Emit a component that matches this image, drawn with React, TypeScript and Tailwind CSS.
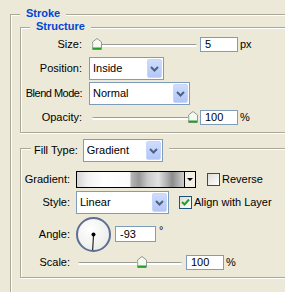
import React from 'react'

// XP style Photoshop "Stroke" layer style panel

function Chevron() {
  return (
    <svg width="9" height="6" viewBox="0 0 9 6">
      <polyline points="1,1 4.5,4.5 8,1" fill="none" stroke="#4d6185" strokeWidth="2" />
    </svg>
  )
}

function Select({ text, className }: { text: string; className: string }) {
  return (
    <div className={`flex h-[23px] shrink-0 items-stretch border border-[#7f9db9] bg-white ${className}`}>
      <span className="flex flex-1 items-center pl-[3px]">{text}</span>
      <div className="m-[1px] flex w-[15px] items-center justify-center rounded-[2px] border border-[#c8d6fb] bg-[linear-gradient(#cfdcfd,#b3c6f7)]">
        <Chevron />
      </div>
    </div>
  )
}

function Field({ value, className }: { value: string; className: string }) {
  return (
    <div className={`flex shrink-0 items-center border border-[#7f9db9] bg-white pl-[4px] ${className}`}>
      {value}
    </div>
  )
}

function Knob() {
  return (
    <svg width="10" height="12" viewBox="0 0 10 12">
      <path d="M0.5 4 L5 0.5 L9.5 4 V11.5 H0.5 Z" fill="#f7f7f3" stroke="#8d9a8d" />
      <path d="M1 10.5 H9" stroke="#21a121" strokeWidth="2" />
      <path d="M1 9 V5" stroke="#b8e0b8" strokeWidth="1" />
    </svg>
  )
}

function Slider({ className, knob }: { className: string; knob: string }) {
  return (
    <div className={`relative h-full shrink-0 ${className}`}>
      <div className="mt-[8px] h-[3px] rounded-full border-t border-[#9c9c94] bg-white" />
      <div className={`absolute top-[2px] ${knob}`}>
        <Knob />
      </div>
    </div>
  )
}

function Checkbox({ checked }: { checked?: boolean }) {
  return (
    <div className="flex h-[13px] w-[13px] items-center justify-center border border-[#1c5180] bg-[linear-gradient(135deg,#dcdcd7,#ffffff)]">
      {checked && (
        <svg width="9" height="9" viewBox="0 0 9 9">
          <polyline points="1,4 3.5,6.5 8,1.5" fill="none" stroke="#21a121" strokeWidth="2" />
        </svg>
      )}
    </div>
  )
}

function AngleDial() {
  return (
    <div className="h-[35px] w-[35px] rounded-full border-2 border-[#5d6d96] bg-[radial-gradient(circle_at_40%_35%,#ffffff,#e6e6e2)]">
      <svg width="31" height="31" viewBox="0 0 31 31">
        <line x1="15.5" y1="15.5" x2="14.7" y2="31" stroke="#000" strokeWidth="1" />
        <circle cx="15.5" cy="15.5" r="2" fill="#000" />
      </svg>
    </div>
  )
}

export default function App() {
  return (
    <div className="h-[292px] w-[285px] overflow-hidden whitespace-nowrap bg-[#ece9d8] font-['Liberation_Sans',Arial,sans-serif] text-[11px] leading-[13px] text-black">
      <div className="relative ml-[10px] mt-[14px] h-[300px] w-[300px] border-l border-t border-[#aca899] shadow-[inset_1px_1px_0_#fff]">
        <span className="absolute left-[9px] top-[-8px] bg-[#ece9d8] px-[6px] font-bold text-[#0046d5]">Stroke</span>

        {/* Structure */}
        <div className="relative ml-[9px] mt-[12px] h-[106px] w-[280px] border border-[#aca899] pt-[8px] shadow-[inset_1px_1px_0_#fff,0_1px_0_#fff]">
          <span className="absolute left-[9px] top-[-8px] bg-[#ece9d8] px-[6px] font-bold text-[#0046d5]">Structure</span>

          <div className="flex h-[17px] items-center">
            <span className="w-[61px] shrink-0 text-right">Size:</span>
            <Slider className="ml-[10px] w-[105px]" knob="left-[0px]" />
            <Field value="5" className="ml-[3px] h-[15px] w-[38px]" />
            <span className="ml-[2px]">px</span>
          </div>

          <div className="mt-[4px] flex h-[23px] items-center">
            <span className="w-[61px] shrink-0 text-right">Position:</span>
            <Select text="Inside" className="ml-[7px] w-[75px]" />
          </div>

          <div className="mt-[2px] flex h-[23px] items-center">
            <span className="w-[61px] shrink-0 text-right tracking-[-0.5px]">Blend Mode:</span>
            <Select text="Normal" className="ml-[7px] w-[101px]" />
          </div>

          <div className="mt-[4px] flex h-[17px] items-center">
            <span className="w-[61px] shrink-0 text-right">Opacity:</span>
            <Slider className="ml-[10px] w-[105px]" knob="left-[96px]" />
            <Field value="100" className="ml-[3px] h-[15px] w-[38px]" />
            <span className="ml-[2px]">%</span>
          </div>
        </div>

        {/* Fill */}
        <div className="relative ml-[9px] mt-[15px] h-[130px] w-[280px] border border-[#aca899] pt-[22px] shadow-[inset_1px_1px_0_#fff,0_1px_0_#fff]">
          <div className="absolute left-[10px] top-[-10px] flex items-center bg-[#ece9d8] pl-[3px] pr-[6px]">
            <span>Fill Type:</span>
            <Select text="Gradient" className="ml-[5px] w-[80px]" />
          </div>

          <div className="flex h-[17px] items-center">
            <span className="w-[49px] shrink-0 text-right">Gradient:</span>
            <div className="ml-[6px] flex h-[17px] w-[120px] shrink-0 border border-black">
              <div className="flex-1 bg-[linear-gradient(to_right,#d6d6d6_0%,#f2f2f2_10%,#ffffff_25%,#fbfbfb_49%,#b4b4b4_51%,#979797_58%,#c9c9c9_66%,#e2e2e2_76%,#a9a9a9_85%,#8c8c8c_89%,#cfcfcf_100%)]" />
              <div className="flex w-[11px] items-center justify-center border-l border-black bg-[#f1efe6]">
                <div className="h-0 w-0 border-x-[3px] border-t-[3px] border-x-transparent border-t-black" />
              </div>
            </div>
            <div className="ml-[11px]">
              <Checkbox />
            </div>
            <span className="ml-[2px]">Reverse</span>
          </div>

          <div className="mt-[3px] flex h-[23px] items-center">
            <span className="w-[49px] shrink-0 text-right">Style:</span>
            <Select text="Linear" className="ml-[6px] w-[93px]" />
            <div className="ml-[10px]">
              <Checkbox checked />
            </div>
            <span className="ml-[2px]">Align with Layer</span>
          </div>

          <div className="mt-[2px] flex h-[36px] items-center">
            <span className="w-[49px] shrink-0 text-right">Angle:</span>
            <div className="ml-[6px]">
              <AngleDial />
            </div>
            <Field value="-93" className="ml-[4px] h-[16px] w-[41px]" />
            <span className="ml-[3px] self-start pt-[8px]">°</span>
          </div>

          <div className="mt-[2px] flex h-[16px] items-center">
            <span className="w-[49px] shrink-0 text-right">Scale:</span>
            <Slider className="ml-[8px] w-[104px]" knob="left-[59px]" />
            <Field value="100" className="ml-[4px] h-[15px] w-[38px]" />
            <span className="ml-[2px]">%</span>
          </div>
        </div>
      </div>
    </div>
  )
}
